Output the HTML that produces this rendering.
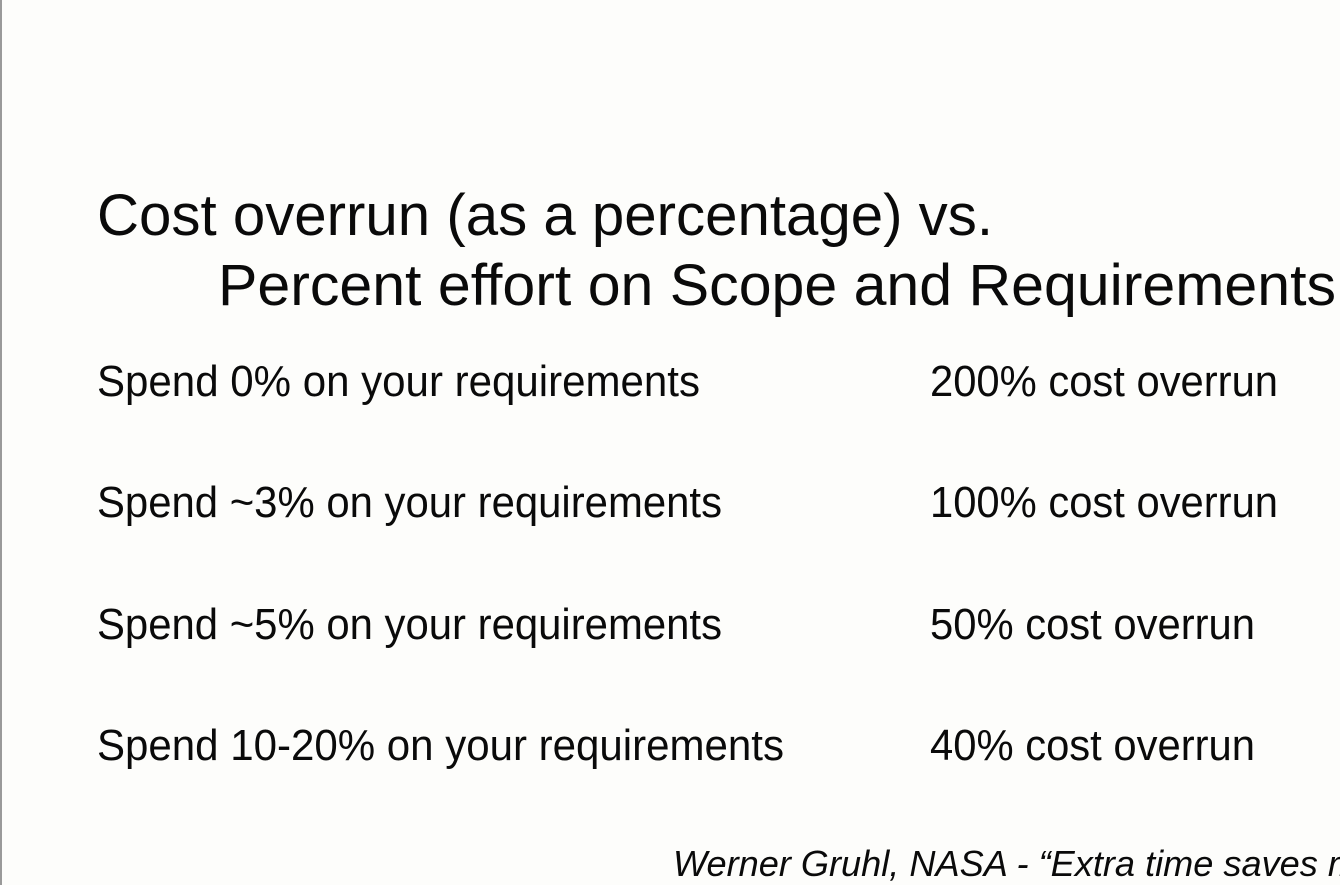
<!DOCTYPE html>
<html><head><meta charset="utf-8"><style>
html,body{margin:0;padding:0;background:#fdfdfb;}
svg{display:block;}
</style></head><body>
<svg width="1340" height="885" viewBox="0 0 1340 885" xmlns="http://www.w3.org/2000/svg">
<rect x="0" y="0" width="1340" height="885" fill="#fdfdfb"/>
<rect x="0" y="0" width="2" height="885" fill="#9a9a9a"/>
<g font-family="Liberation Sans, sans-serif" fill="#0a0a0a">
<text x="97" y="235" font-size="58" font-weight="300" textLength="896" lengthAdjust="spacingAndGlyphs">Cost overrun (as a percentage) vs.</text>
<text x="218" y="305" font-size="58" textLength="1118" lengthAdjust="spacingAndGlyphs">Percent effort on Scope and Requirements</text>
<g font-size="44">
<text x="97" y="396" textLength="603" lengthAdjust="spacingAndGlyphs">Spend 0% on your requirements</text>
<text x="930" y="396" textLength="348" lengthAdjust="spacingAndGlyphs">200% cost overrun</text>
<text x="97" y="517" textLength="625" lengthAdjust="spacingAndGlyphs">Spend ~3% on your requirements</text>
<text x="930" y="517" textLength="348" lengthAdjust="spacingAndGlyphs">100% cost overrun</text>
<text x="97" y="639" textLength="625" lengthAdjust="spacingAndGlyphs">Spend ~5% on your requirements</text>
<text x="930" y="639" textLength="325" lengthAdjust="spacingAndGlyphs">50% cost overrun</text>
<text x="97" y="760" textLength="687" lengthAdjust="spacingAndGlyphs">Spend 10-20% on your requirements</text>
<text x="930" y="760" textLength="325" lengthAdjust="spacingAndGlyphs">40% cost overrun</text>
</g>
<text x="673" y="876" font-size="36" font-style="italic" textLength="685" lengthAdjust="spacingAndGlyphs">Werner Gruhl, NASA - “Extra time saves m</text>
</g>
</svg>
</body></html>
